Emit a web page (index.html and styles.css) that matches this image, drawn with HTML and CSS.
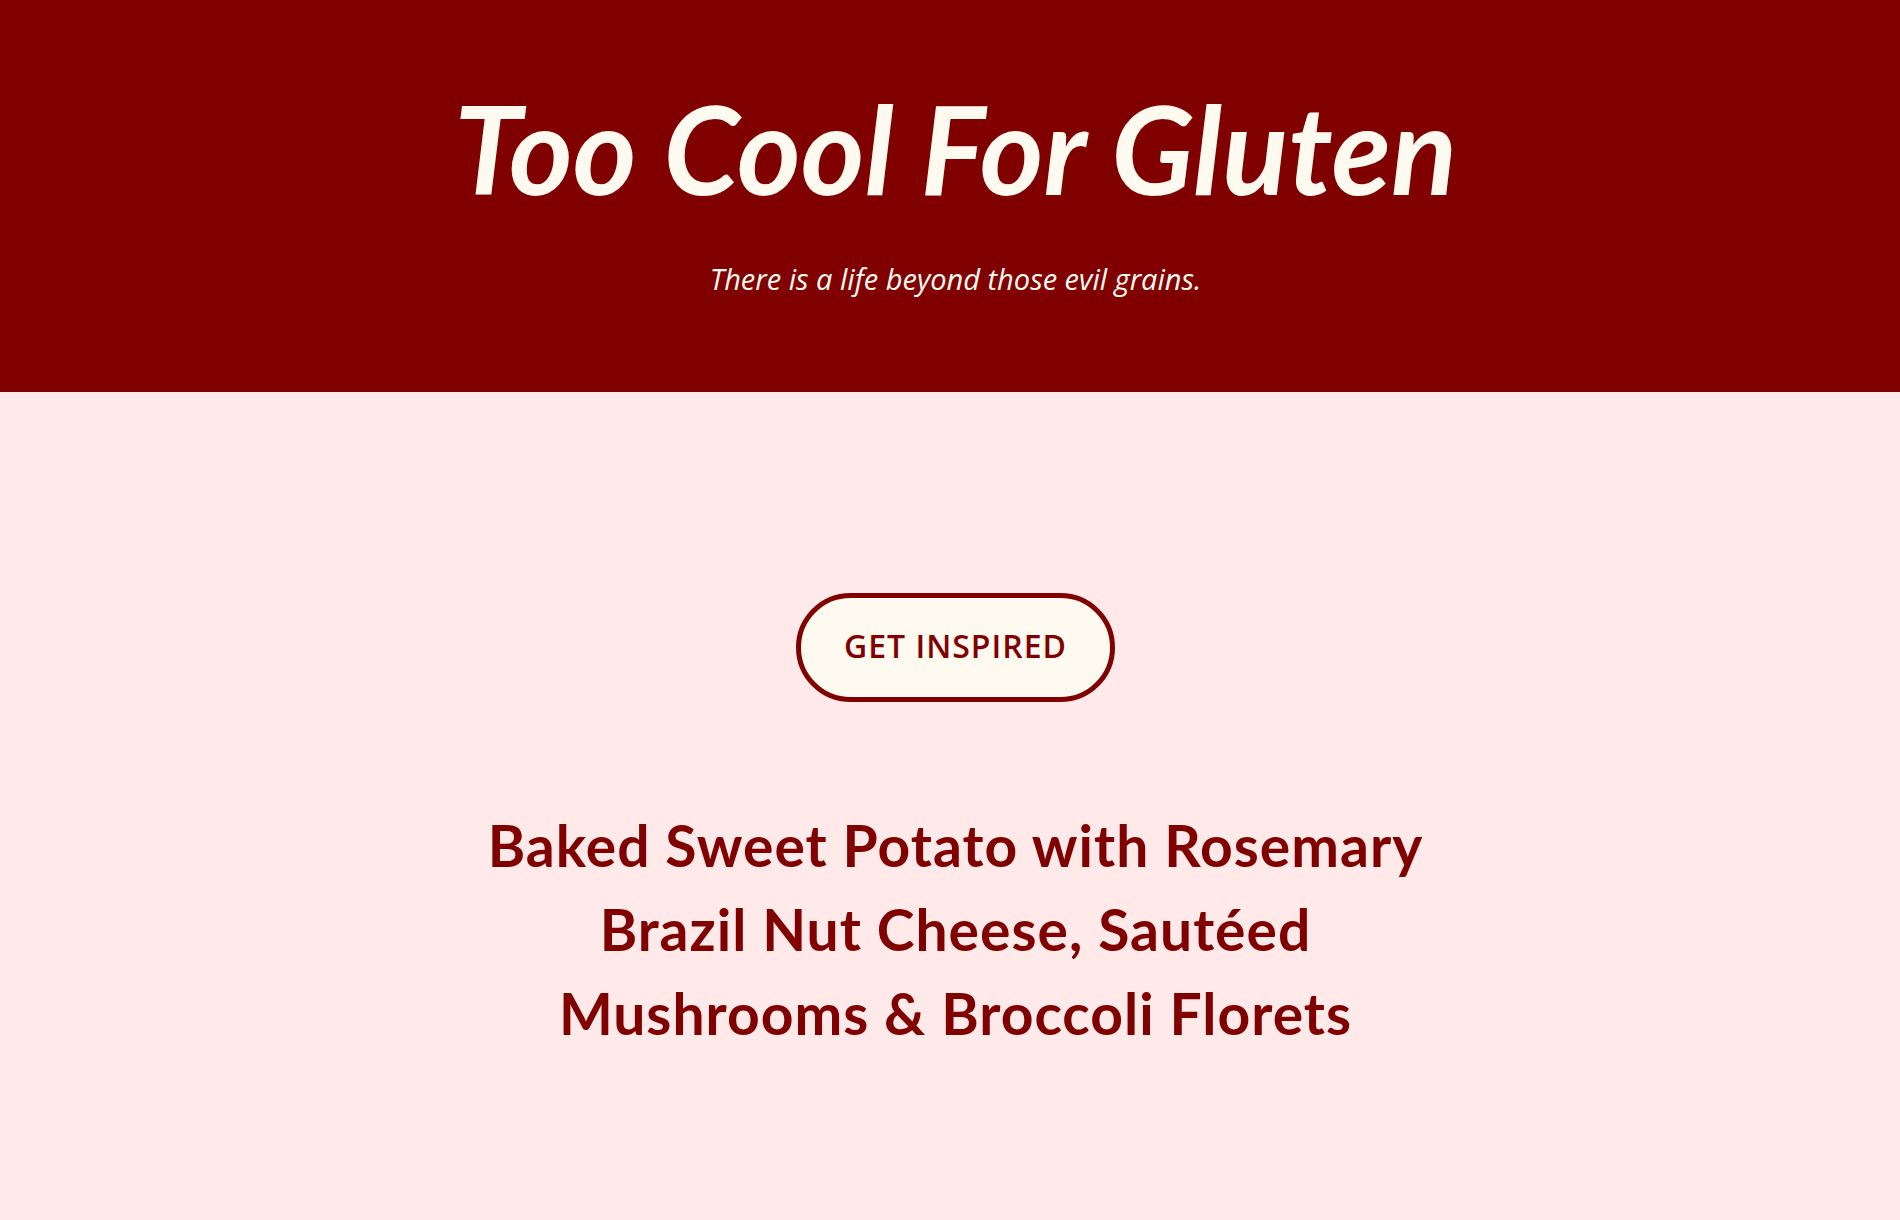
FILE: index.html
```html
<!DOCTYPE html>
<html lang="en">
<head>
<meta charset="utf-8">
<title>Too Cool For Gluten</title>
<link rel="stylesheet" href="styles.css">
</head>
<body>
<header class="hero">
  <h1 class="hero-title">Too Cool For Gluten</h1>
  <p class="hero-tagline">There is a life beyond those evil grains.</p>
</header>
<main class="content">
  <a class="btn-inspire" href="#">GET INSPIRED</a>
  <h2 class="recipe-title">Baked Sweet Potato with Rosemary Brazil Nut Cheese, Sautéed Mushrooms &amp; Broccoli Florets</h2>
</main>
</body>
</html>
```
FILE: styles.css
```css
html, body {
  margin: 0;
  padding: 0;
}
body {
  background: #ffe9e9;
  font-family: "Lato", "Open Sans", sans-serif;
  min-height: 1220px;
}
.hero {
  background: #800000;
  height: 392px;
  box-sizing: border-box;
  padding: 75px 0 0 11px;
  text-align: center;
}
.hero-title {
  margin: 0;
  font-family: "Lato", sans-serif;
  font-weight: 700;
  font-style: italic;
  font-size: 122px;
  line-height: 1.2;
  color: #fffaf0;
}
.hero-tagline {
  margin: 36px 0 0;
  font-family: "Open Sans", sans-serif;
  font-style: italic;
  font-size: 29px;
  line-height: 1.5;
  color: #fffaf0;
}
.content {
  display: flex;
  flex-direction: column;
  align-items: center;
  padding: 201px 0 0 11px;
}
.btn-inspire {
  display: inline-flex;
  align-items: center;
  justify-content: center;
  box-sizing: border-box;
  width: 319px;
  height: 109px;
  padding-bottom: 4px;
  border: 5px solid #800000;
  border-radius: 55px;
  background: #fffaf0;
  color: #800000;
  font-family: "Open Sans", sans-serif;
  font-weight: 600;
  font-size: 32px;
  letter-spacing: 1px;
  text-decoration: none;
}
.recipe-title {
  margin: 101px 0 0;
  max-width: 990px;
  font-family: "Lato", sans-serif;
  font-weight: 700;
  font-size: 57px;
  letter-spacing: 1px;
  line-height: 84px;
  text-align: center;
  color: #800000;
}
```
